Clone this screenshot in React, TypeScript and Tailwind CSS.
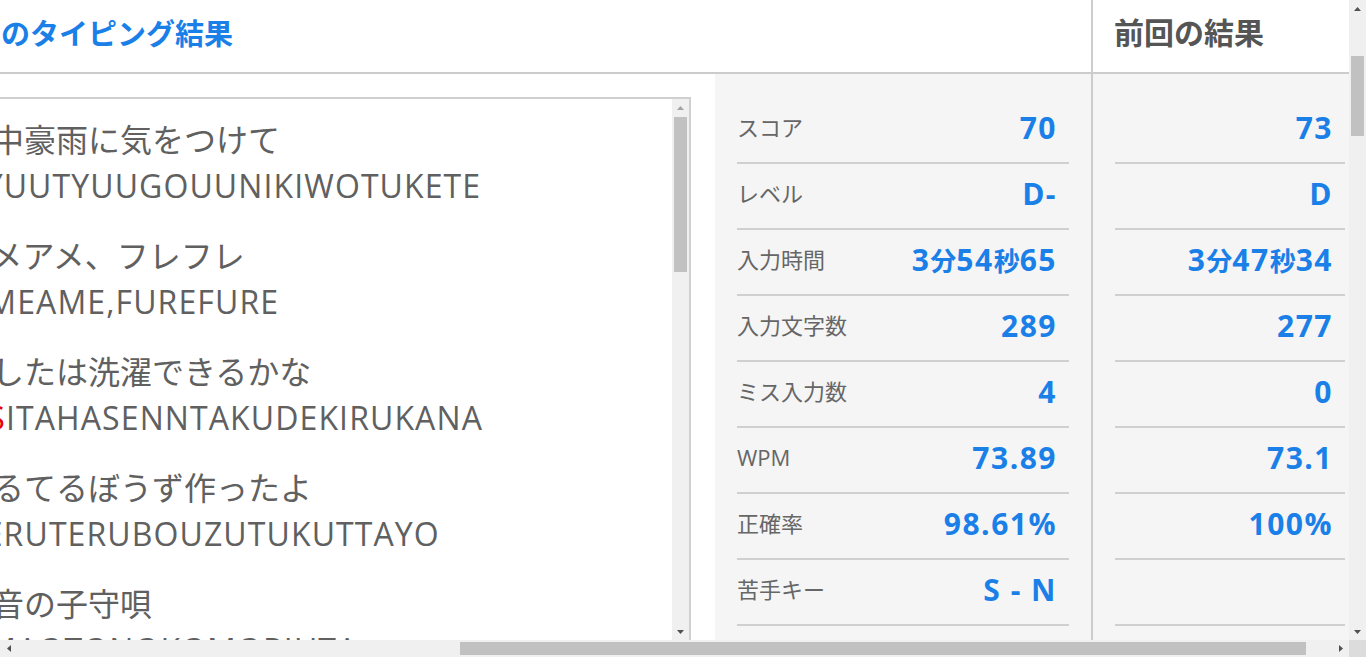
import React from "react";

const stats = [
  { label: "スコア", now: "70", prev: "73" },
  { label: "レベル", now: "D-", prev: "D" },
  { label: "入力時間", now: "3分54秒65", prev: "3分47秒34" },
  { label: "入力文字数", now: "289", prev: "277" },
  { label: "ミス入力数", now: "4", prev: "0" },
  { label: "WPM", now: "73.89", prev: "73.1" },
  { label: "正確率", now: "98.61%", prev: "100%" },
  { label: "苦手キー", now: "S - N", prev: "" },
];

const lyrics: { jp: string; ro: React.ReactNode }[] = [
  { jp: "集中豪雨に気をつけて", ro: "SYUUTYUUGOUUNIKIWOTUKETE" },
  { jp: "アメアメ、フレフレ", ro: "AMEAME,FUREFURE" },
  {
    jp: "あしたは洗濯できるかな",
    ro: (
      <>
        A<span className="text-[#e60000]">S</span>ITAHASENNTAKUDEKIRUKANA
      </>
    ),
  },
  { jp: "てるてるぼうず作ったよ", ro: "TERUTERUBOUZUTUKUTTAYO" },
  { jp: "雨音の子守唄", ro: "AMAOTONOKOMORIUTA" },
];

function Value({ text }: { text: string }) {
  const parts = text.split(/([分秒])/).filter((p) => p !== "");
  return (
    <span className="text-[30px] font-bold text-[#1a80e8] tracking-[1.5px] whitespace-nowrap">
      {parts.map((p, i) =>
        p === "分" || p === "秒" ? (
          <span key={i} className="text-[26px] tracking-normal">
            {p}
          </span>
        ) : (
          <span key={i}>{p}</span>
        )
      )}
    </span>
  );
}

function Tri({ dir, color }: { dir: "up" | "down" | "left" | "right"; color: string }) {
  const pts =
    dir === "up"
      ? "0,4 3.5,0 7,4"
      : dir === "down"
      ? "0,0 7,0 3.5,4"
      : dir === "left"
      ? "4,0 4,7 0,3.5"
      : "0,0 0,7 4,3.5";
  const w = dir === "up" || dir === "down" ? 7 : 4;
  const h = dir === "up" || dir === "down" ? 4 : 7;
  return (
    <svg width={w} height={h} viewBox={`0 0 ${w} ${h}`}>
      <polygon points={pts} fill={color} />
    </svg>
  );
}

export default function App() {
  return (
    <div className="w-[1366px] h-[657px] overflow-hidden flex flex-col bg-white font-['Open_Sans','Noto_Sans_CJK_JP',sans-serif]">
      <div className="flex flex-1 min-h-0">
        {/* page viewport */}
        <div className="flex-1 min-w-0 overflow-hidden flex">
          {/* left column: current result */}
          <div className="w-[1091px] shrink-0 flex flex-col">
            <div className="h-[74px] shrink-0 border-b-2 border-[#cccccc] flex items-center overflow-hidden">
              <h2 className="ml-[-57px] pb-[6px] text-[29px] font-bold text-[#1a80e8] whitespace-nowrap leading-none">
                今回のタイピング結果
              </h2>
            </div>
            <div className="flex flex-1 min-h-0">
              <div className="w-[691px] shrink-0 mt-[23px] border-t-2 border-r-2 border-[#d0d0d0] flex overflow-hidden">
                <div className="flex-1 min-w-0 overflow-hidden pt-[18px]">
                  <div className="ml-[-40px] text-[32px] leading-[46px] text-[#606060] whitespace-nowrap">
                    {lyrics.map((l, i) => (
                      <div key={i} className="mb-[24px]">
                        <p>{l.jp}</p>
                        <p className="ml-[6px] tracking-[1.1px]">{l.ro}</p>
                      </div>
                    ))}
                  </div>
                </div>
                {/* inner scrollbar */}
                <div className="w-[17px] shrink-0 bg-[#f0f0f0] flex flex-col items-center">
                  <div className="h-[17px] flex items-center justify-center">
                    <Tri dir="up" color="#a3a3a3" />
                  </div>
                  <div className="w-[13px] h-[155px] bg-[#c1c1c1] mt-[1px]" />
                  <div className="flex-1" />
                  <div className="h-[17px] flex items-center justify-center">
                    <Tri dir="down" color="#505050" />
                  </div>
                </div>
              </div>
              <div className="w-[24px] shrink-0" />
              <div className="w-[376px] shrink-0 bg-[#f5f5f5] px-[22px] pt-[24px]">
                {stats.map((s) => (
                  <div
                    key={s.label}
                    className="h-[66px] border-b-2 border-[#d0d0d0] flex items-center justify-between pb-[6px] pr-[12px]"
                  >
                    <span className="text-[22px] text-[#666666]">{s.label}</span>
                    <Value text={s.now} />
                  </div>
                ))}
              </div>
            </div>
          </div>
          {/* divider */}
          <div className="w-[2px] shrink-0 bg-[#cccccc]" />
          {/* right column: previous result */}
          <div className="w-[274px] shrink-0 flex flex-col">
            <div className="h-[74px] shrink-0 border-b-2 border-[#cccccc] flex items-center pl-[21px]">
              <h2 className="pb-[6px] text-[30px] font-bold text-[#555555] whitespace-nowrap leading-none">
                前回の結果
              </h2>
            </div>
            <div className="flex-1 bg-[#f5f5f5] px-[22px] pt-[24px]">
              {stats.map((s) => (
                <div
                  key={s.label}
                  className="h-[66px] border-b-2 border-[#d0d0d0] flex items-center justify-end pb-[6px] pr-[12px]"
                >
                  <Value text={s.prev} />
                </div>
              ))}
            </div>
          </div>
        </div>
        {/* page vertical scrollbar */}
        <div className="w-[17px] shrink-0 bg-[#f0f0f0] flex flex-col items-center">
          <div className="h-[17px] flex items-center justify-center">
            <Tri dir="up" color="#505050" />
          </div>
          <div className="w-[13px] h-[80px] bg-[#c1c1c1] mt-[39px]" />
          <div className="flex-1" />
          <div className="h-[17px] flex items-center justify-center">
            <Tri dir="down" color="#505050" />
          </div>
        </div>
      </div>
      {/* horizontal scrollbar */}
      <div className="h-[17px] shrink-0 flex">
        <div className="flex-1 bg-[#f0f0f0] flex items-center">
          <div className="w-[17px] h-[17px] flex items-center justify-center">
            <Tri dir="left" color="#505050" />
          </div>
          <div className="ml-[443px] w-[846px] h-[13px] bg-[#c1c1c1]" />
          <div className="flex-1" />
          <div className="w-[17px] h-[17px] flex items-center justify-center">
            <Tri dir="right" color="#505050" />
          </div>
        </div>
        <div className="w-[17px] bg-[#dcdcdc]" />
      </div>
    </div>
  );
}
